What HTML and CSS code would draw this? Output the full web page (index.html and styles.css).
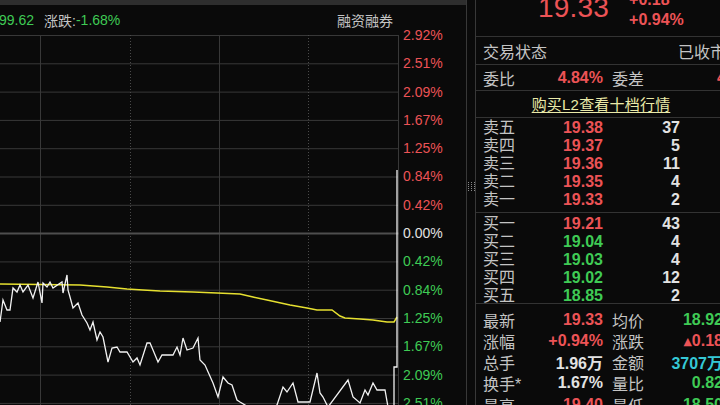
FILE: index.html
```html
<!DOCTYPE html>
<html lang="zh-CN">
<head>
<meta charset="utf-8">
<title>分时走势</title>
<link rel="stylesheet" href="styles.css">
</head>
<body>
<div class="app">
  <section class="left">
    <div class="band"></div>
    <div class="chartwrap">
      <div class="plot">
        <div class="hdr">
          <span class="g">99.62</span>
          <span class="lbl">涨跌:</span><span class="g">-1.68%</span>
          <span class="spacer"></span>
          <span class="lbl">融资融券</span>
        </div>
        <svg class="chart" width="399" height="370" viewBox="0 0 399 370">
          <g stroke="#383838" stroke-width="1" fill="none">
            <line x1="0" y1="0.5" x2="399" y2="0.5"/>
            <line x1="0" y1="28.8" x2="399" y2="28.8"/>
            <line x1="0" y1="57.1" x2="399" y2="57.1"/>
            <line x1="0" y1="85.4" x2="399" y2="85.4"/>
            <line x1="0" y1="113.7" x2="399" y2="113.7"/>
            <line x1="0" y1="142" x2="399" y2="142"/>
            <line x1="0" y1="170.3" x2="399" y2="170.3"/>
            <line x1="0" y1="226.9" x2="399" y2="226.9"/>
            <line x1="0" y1="255.2" x2="399" y2="255.2"/>
            <line x1="0" y1="283.5" x2="399" y2="283.5"/>
            <line x1="0" y1="311.8" x2="399" y2="311.8"/>
            <line x1="0" y1="340.1" x2="399" y2="340.1"/>
            <line x1="0" y1="368.4" x2="399" y2="368.4"/>
            <line x1="40.5" y1="0" x2="40.5" y2="370"/>
            <line x1="219.5" y1="0" x2="219.5" y2="370"/>
            <line x1="398.5" y1="0" x2="398.5" y2="370"/>
          </g>
          <g stroke="#4a4a4a" stroke-width="1" stroke-dasharray="1 2">
            <line x1="130.5" y1="0" x2="130.5" y2="370"/>
            <line x1="308.5" y1="0" x2="308.5" y2="370"/>
          </g>
          <line x1="0" y1="198.6" x2="399" y2="198.6" stroke="#4e4e4e" stroke-width="2"/>
          <polyline fill="none" stroke="#e6e030" stroke-width="1.5" points="0,249 80,250 107,252 127,254 143,255 160,256 193,257 217,258 240,259 253,262 267,265 290,270 307,273 317,275 332,275 340,281 345,283 360,284 373,285 387,287 394,287 397,282"/>
          <polyline fill="none" stroke="#f2f2f2" stroke-width="1.3" points="0,287 3,265 7,275 10,275 13,253 17,257 20,250 23,257 28,250 33,263 38,247 42,268 43,248 47,252 50,247 53,253 62,247 63,258 67,240 68,255 70,262 73,273 78,268 82,280 87,288 90,295 93,287 97,305 100,297 103,302 108,327 112,313 117,312 120,317 127,317 133,327 137,323 140,330 147,308 150,308 153,315 158,327 162,320 173,320 177,312 180,320 183,303 187,315 193,313 198,303 200,325 205,330 213,348 218,362 223,342 228,348 232,350 237,365 240,367 255,376 270,374 277,370 283,352 287,357 293,348 298,367 310,367 317,338 320,358 323,362 328,372 348,345 353,362 360,368 365,355 368,360 373,348 377,355 385,355 388,372 394,372 394,332 397,332 397,135"/>
        </svg>
      </div>
      <div class="axis">
        <span class="r">2.92%</span>
        <span class="r">2.51%</span>
        <span class="r">2.09%</span>
        <span class="r">1.67%</span>
        <span class="r">1.25%</span>
        <span class="r">0.84%</span>
        <span class="r">0.42%</span>
        <span class="w">0.00%</span>
        <span class="g">0.42%</span>
        <span class="g">0.84%</span>
        <span class="g">1.25%</span>
        <span class="g">1.67%</span>
        <span class="g">2.09%</span>
        <span class="g">2.51%</span>
      </div>
    </div>
  </section>

  <div class="split">
    <svg class="grip" width="7" height="9" viewBox="0 0 7 9">
      <g fill="#8a8a8a">
        <rect x="0" y="0" width="1" height="1"/><rect x="3" y="0" width="1" height="1"/><rect x="6" y="0" width="1" height="1"/>
        <rect x="0" y="2" width="1" height="1"/><rect x="3" y="2" width="1" height="1"/><rect x="6" y="2" width="1" height="1"/>
        <rect x="0" y="4" width="1" height="1"/><rect x="3" y="4" width="1" height="1"/><rect x="6" y="4" width="1" height="1"/>
        <rect x="0" y="6" width="1" height="1"/><rect x="3" y="6" width="1" height="1"/><rect x="6" y="6" width="1" height="1"/>
        <rect x="0" y="8" width="1" height="1"/><rect x="3" y="8" width="1" height="1"/><rect x="6" y="8" width="1" height="1"/>
      </g>
    </svg>
  </div>

  <section class="panel">
    <div class="inner">
      <div class="quote">
        <span class="big r">19.33</span>
        <div class="chg">
          <span class="r">+0.18</span>
          <span class="r">+0.94%</span>
        </div>
      </div>
      <div class="row status">
        <span class="lbl">交易状态</span>
        <span class="lbl">已收市</span>
      </div>
      <div class="row ratio">
        <span class="lbl">委比</span>
        <span class="num r right">4.84%</span>
        <span></span>
        <span class="lbl">委差</span>
        <span class="num r diff">46</span>
      </div>
      <div class="row l2">
        <span class="link">购买L2查看十档行情</span>
      </div>
      <div class="book sell">
        <span class="blbl">卖五</span><span class="num r right">19.38</span><span class="num w right">37</span>
        <span class="blbl">卖四</span><span class="num r right">19.37</span><span class="num w right">5</span>
        <span class="blbl">卖三</span><span class="num r right">19.36</span><span class="num w right">11</span>
        <span class="blbl">卖二</span><span class="num r right">19.35</span><span class="num w right">4</span>
        <span class="blbl">卖一</span><span class="num r right">19.33</span><span class="num w right">2</span>
      </div>
      <div class="book buy">
        <span class="blbl">买一</span><span class="num r right">19.21</span><span class="num w right">43</span>
        <span class="blbl">买二</span><span class="num g right">19.04</span><span class="num w right">4</span>
        <span class="blbl">买三</span><span class="num g right">19.03</span><span class="num w right">4</span>
        <span class="blbl">买四</span><span class="num g right">19.02</span><span class="num w right">12</span>
        <span class="blbl">买五</span><span class="num g right">18.85</span><span class="num w right">2</span>
      </div>
      <div class="stats">
        <span class="lbl">最新</span><span class="num r right">19.33</span><span></span><span class="lbl">均价</span><span class="num g right">18.92</span>
        <span class="lbl">涨幅</span><span class="num r right">+0.94%</span><span></span><span class="lbl">涨跌</span><span class="num r right"><span class="tri">▲</span>0.18</span>
        <span class="lbl">总手</span><span class="num w right">1.96万</span><span></span><span class="lbl">金额</span><span class="num c right">3707万</span>
        <span class="lbl">换手*</span><span class="num w right">1.67%</span><span></span><span class="lbl">量比</span><span class="num g right">0.82</span>
        <span class="lbl">最高</span><span class="num r right">19.40</span><span></span><span class="lbl">最低</span><span class="num g right">18.50</span>
      </div>
    </div>
  </section>
</div>
</body>
</html>
```

FILE: styles.css
```css
* { box-sizing: border-box; }
html, body { margin: 0; padding: 0; }
body {
  background: #0a0a0a;
  font-family: "Liberation Sans", "Noto Sans CJK SC", sans-serif;
  color: #c8c8c8;
  width: 720px;
  height: 405px;
  overflow: hidden;
}
.app {
  display: flex;
  width: 720px;
  height: 405px;
  overflow: hidden;
}
.r { color: #ec5356; }
.g { color: #3fcb55; }
.w { color: #e2e2e2; }
.c { color: #35c8d6; }
.lbl { color: #c4c4c4; }

/* left chart */
.left {
  width: 466px;
  flex: none;
  display: flex;
  flex-direction: column;
}
.band {
  height: 5px;
  background: #2e2e2e;
  flex: none;
}
.chartwrap {
  display: flex;
  flex: 1;
  overflow: hidden;
}
.plot {
  width: 399px;
  flex: none;
  display: flex;
  flex-direction: column;
}
.hdr {
  height: 30px;
  flex: none;
  display: flex;
  align-items: center;
  font-size: 14px;
  padding: 0 6px 1px 0;
  margin-left: -1px;
  white-space: nowrap;
}
.hdr .g:first-child { margin-right: 10px; }
.spacer { flex: 1; }
.chart { display: block; flex: none; }
.axis {
  flex: 1;
  display: flex;
  flex-direction: column;
  padding: 16px 0 0 4px;
  font-size: 14px;
}
.axis span {
  display: block;
  height: 28.3px;
  line-height: 28.3px;
  flex: none;
}

/* splitter */
.split {
  width: 10px;
  flex: none;
  border-left: 1px solid #383838;
  border-right: 1px solid #383838;
  display: flex;
  flex-direction: column;
  align-items: center;
  padding-top: 182px;
}
.grip { display: block; }

/* right panel */
.panel {
  width: 244px;
  flex: none;
  overflow: hidden;
}
.inner {
  width: 250px;
}
.num { font-weight: bold; font-size: 16px; }
.right { text-align: right; }
.quote {
  height: 37px;
  border-bottom: 1px solid #333;
  display: flex;
  overflow: hidden;
  padding-left: 62px;
}
.big {
  font-size: 28px;
  line-height: 28px;
  margin-top: -6px;
  letter-spacing: 0.2px;
}
.chg {
  display: flex;
  flex-direction: column;
  margin-left: 20px;
  margin-top: -10px;
  font-size: 16px;
  font-weight: bold;
  line-height: 20px;
}
.row {
  display: grid;
  align-items: center;
  font-size: 16px;
  border-bottom: 1px solid #333;
  padding-left: 7px;
  white-space: nowrap;
}
.status {
  height: 28px;
  grid-template-columns: 1fr auto;
}
.ratio {
  height: 26px;
  grid-template-columns: 56px 64px 9px 48px 66px;
}
.diff { text-align: left; padding-left: 57px; }
.l2 {
  height: 27px;
  grid-template-columns: 1fr;
  justify-items: center;
  padding-left: 0;
  padding-bottom: 1px;
}
.link {
  color: #eaeaa8;
  font-size: 15px;
  text-decoration: underline;
  text-underline-offset: 2px;
  letter-spacing: 0.2px;
}
.book {
  display: grid;
  grid-template-columns: 56px 64px 77px;
  grid-auto-rows: 18px;
  align-items: center;
  padding-left: 7px;
  border-bottom: 1px solid #333;
  line-height: 18px;
}
.sell { padding-top: 1px; height: 95px; }
.buy { padding-top: 2px; height: 91px; }
.blbl { color: #c4c4c4; font-size: 16px; }
.stats {
  display: grid;
  grid-template-columns: 56px 64px 9px 48px 63px;
  grid-auto-rows: 21.25px;
  align-items: center;
  padding: 5px 0 0 7px;
  font-size: 16px;
  white-space: nowrap;
}
.tri { font-size: 11px; font-family: "DejaVu Sans", sans-serif; vertical-align: 1px; }
```
